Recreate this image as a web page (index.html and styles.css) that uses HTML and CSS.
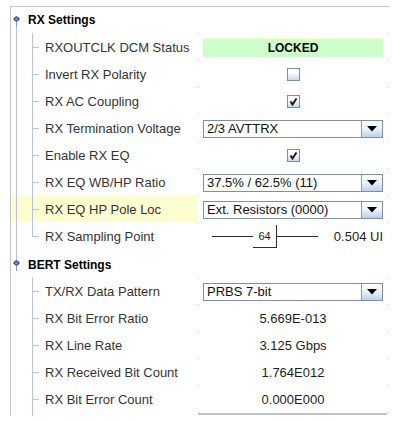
FILE: index.html
```html
<!DOCTYPE html>
<html>
<head>
<meta charset="utf-8">
<link rel="stylesheet" href="styles.css">
</head>
<body>
<div class="pane">
  <div class="header h-first">
    <svg class="node" width="9" height="12" viewBox="0 0 9 12"><line x1="4.5" y1="6" x2="4.5" y2="12" stroke="#8f9bd0" stroke-width="1"/><line x1="1" y1="4" x2="8" y2="4" stroke="#5466b0" stroke-width="1"/><circle cx="4.5" cy="4" r="2.2" fill="#7688d0" stroke="#2e3f8f" stroke-width="1"/></svg>
    <span>RX Settings</span>
  </div>
  <div class="row">
    <div class="label g c">RXOUTCLK DCM Status</div>
    <div class="value"><div class="status">LOCKED</div></div>
  </div>
  <div class="row">
    <div class="label g c">Invert RX Polarity</div>
    <div class="value"><div class="cb"></div></div>
  </div>
  <div class="row">
    <div class="label g c">RX AC Coupling</div>
    <div class="value"><div class="cb"><svg width="11" height="11" viewBox="0 0 11 11"><path d="M2.5 5.5 L4.5 8.5 L8.5 2.5" fill="none" stroke="#1a1a1a" stroke-width="2"/></svg></div></div>
  </div>
  <div class="row">
    <div class="label g c">RX Termination Voltage</div>
    <div class="value"><div class="combo"><span class="txt">2/3 AVTTRX</span><span class="btn"><svg width="10" height="6" viewBox="0 0 10 6"><polygon points="0,0 10,0 5,5.5" fill="#000"/></svg></span></div></div>
  </div>
  <div class="row">
    <div class="label g c">Enable RX EQ</div>
    <div class="value"><div class="cb"><svg width="11" height="11" viewBox="0 0 11 11"><path d="M2.5 5.5 L4.5 8.5 L8.5 2.5" fill="none" stroke="#1a1a1a" stroke-width="2"/></svg></div></div>
  </div>
  <div class="row">
    <div class="label g c">RX EQ WB/HP Ratio</div>
    <div class="value"><div class="combo"><span class="txt">37.5% / 62.5% (11)</span><span class="btn"><svg width="10" height="6" viewBox="0 0 10 6"><polygon points="0,0 10,0 5,5.5" fill="#000"/></svg></span></div></div>
  </div>
  <div class="row">
    <div class="label g c sel">RX EQ HP Pole Loc</div>
    <div class="value"><div class="combo"><span class="txt">Ext. Resistors (0000)</span><span class="btn"><svg width="10" height="6" viewBox="0 0 10 6"><polygon points="0,0 10,0 5,5.5" fill="#000"/></svg></span></div></div>
  </div>
  <div class="row">
    <div class="label g c last">RX Sampling Point</div>
    <div class="value">
      <div class="slider">
        <span class="track"></span>
        <span class="thumb">64</span>
        <span class="track"></span>
        <span class="sval">0.504 UI</span>
      </div>
    </div>
  </div>
  <div class="header h-last">
    <svg class="node" width="9" height="12" viewBox="0 0 9 12"><line x1="4.5" y1="6" x2="4.5" y2="12" stroke="#8f9bd0" stroke-width="1"/><line x1="1" y1="4" x2="8" y2="4" stroke="#5466b0" stroke-width="1"/><circle cx="4.5" cy="4" r="2.2" fill="#7688d0" stroke="#2e3f8f" stroke-width="1"/></svg>
    <span>BERT Settings</span>
  </div>
  <div class="row">
    <div class="label c">TX/RX Data Pattern</div>
    <div class="value"><div class="combo"><span class="txt">PRBS 7-bit</span><span class="btn"><svg width="10" height="6" viewBox="0 0 10 6"><polygon points="0,0 10,0 5,5.5" fill="#000"/></svg></span></div></div>
  </div>
  <div class="row">
    <div class="label c">RX Bit Error Ratio</div>
    <div class="value"><span class="num">5.669E-013</span></div>
  </div>
  <div class="row">
    <div class="label c">RX Line Rate</div>
    <div class="value"><span class="num">3.125 Gbps</span></div>
  </div>
  <div class="row">
    <div class="label c">RX Received Bit Count</div>
    <div class="value"><span class="num">1.764E012</span></div>
  </div>
  <div class="row">
    <div class="label c">RX Bit Error Count</div>
    <div class="value"><span class="num">0.000E000</span></div>
  </div>
  <div class="row partial">
    <div class="label cv"></div>
    <div class="value"><div class="cut"></div></div>
  </div>
</div>
</body>
</html>
```
FILE: styles.css
```css
body {
  margin: 0;
  background: #fff;
  font-family: "Liberation Sans", Arial, sans-serif;
}

.pane {
  margin: 6px 0 0 10px;
  width: 379px;
  height: 409px;
  border-top: 1px solid #c6c6c6;
  border-left: 1px solid #c6c6c6;
  overflow: hidden;
}

.header {
  height: 26px;
  display: flex;
  align-items: center;
  padding-left: 1px;
  font-weight: bold;
  font-size: 12px;
  color: #000;
  background-repeat: no-repeat;
  box-sizing: border-box;
}

.header .node {
  margin-right: 7px;
  margin-top: 1px;
}

.h-first {
  background-image: linear-gradient(#b9c1e2, #b9c1e2);
  background-position: 5px 17px;
  background-size: 1px 9px;
}

.h-last {
  height: 28px;
  padding-top: 3px;
  background-image: linear-gradient(#b9c1e2, #b9c1e2);
  background-position: 5px 0;
  background-size: 1px 13px;
}

.row {
  display: flex;
  height: 27px;
}

.label {
  width: 187px;
  flex: none;
  box-sizing: border-box;
  padding-left: 34px;
  padding-top: 1px;
  display: flex;
  align-items: center;
  font-size: 13px;
  color: #353535;
  white-space: nowrap;
  background-repeat: no-repeat;
}

.label.c {
  background-image:
    linear-gradient(#b9c1e2, #b9c1e2),
    linear-gradient(#b9c1e2, #b9c1e2);
  background-position: 21px 0, 22px 14px;
  background-size: 1px 100%, 6px 1px;
}

.label.c.last {
  background-size: 1px 15px, 6px 1px;
}

.label.g {
  background-image:
    linear-gradient(#b9c1e2, #b9c1e2),
    linear-gradient(#b9c1e2, #b9c1e2),
    linear-gradient(#b9c1e2, #b9c1e2);
  background-position: 21px 0, 22px 14px, 5px 0;
  background-size: 1px 100%, 6px 1px, 1px 100%;
}

.label.g.last {
  background-size: 1px 15px, 6px 1px, 1px 100%;
}

.label.cv {
  background-image: linear-gradient(#b9c1e2, #b9c1e2);
  background-position: 21px 0;
  background-size: 1px 100%;
}

.label.sel {
  background-color: #fdfdd0;
}

.value {
  width: 191px;
  flex: none;
  box-sizing: border-box;
  padding: 0 6px 0 5px;
  display: flex;
  align-items: center;
  justify-content: center;
  background-image:
    linear-gradient(#cfcfcf, #cfcfcf),
    linear-gradient(#cfcfcf, #cfcfcf);
  background-position: 0 0, 190px 0;
  background-size: 1px 1px, 1px 1px;
  background-repeat: no-repeat;
}

.status {
  width: 100%;
  height: 19px;
  margin-top: 2px;
  background: #ccffcc;
  border-top: 1px solid #f2ffc8;
  box-sizing: border-box;
  display: flex;
  align-items: center;
  justify-content: center;
  font-weight: bold;
  font-size: 12px;
  color: #000;
}

.cb {
  width: 13px;
  height: 13px;
  box-sizing: border-box;
  border: 1px solid #7d8da4;
  background: linear-gradient(#ffffff 35%, #c6d8f1);
  display: flex;
  align-items: center;
  justify-content: center;
  margin-top: 1px;
}

.combo {
  width: 100%;
  height: 18px;
  margin-top: 2px;
  box-sizing: border-box;
  border: 1px solid #7f8ea5;
  background: #fff;
  display: flex;
}

.combo .txt {
  flex: 1;
  padding-left: 3px;
  font-size: 13px;
  line-height: 16px;
  color: #111;
  white-space: nowrap;
  overflow: hidden;
}

.combo .btn {
  width: 20px;
  flex: none;
  border-left: 1px solid #8d9cb2;
  background: linear-gradient(#ffffff, #eef3fb 45%, #bcd2ef);
  display: flex;
  align-items: center;
  justify-content: center;
}

.num {
  font-size: 13px;
  color: #1e1e1e;
  padding-top: 2px;
}

.slider {
  width: 100%;
  display: flex;
  align-items: center;
  padding-left: 9px;
  box-sizing: border-box;
  padding-top: 1px;
}

.track {
  width: 41px;
  height: 1px;
  background: #2e2e2e;
  flex: none;
}

.thumb {
  width: 23px;
  height: 21px;
  flex: none;
  border-right: 1px solid #2e2e2e;
  border-bottom: 1px solid #2e2e2e;
  display: flex;
  align-items: center;
  justify-content: center;
  font-size: 11px;
  color: #222;
  padding-top: 1px;
  box-sizing: content-box;
}

.sval {
  flex: 1;
  text-align: right;
  font-size: 13px;
  color: #222;
}

.partial .value {
  align-items: flex-start;
  padding: 0;
  justify-content: flex-start;
}

.cut {
  width: 189px;
  margin-top: 1px;
  border-top: 2px solid #c2c2c2;
}
```
